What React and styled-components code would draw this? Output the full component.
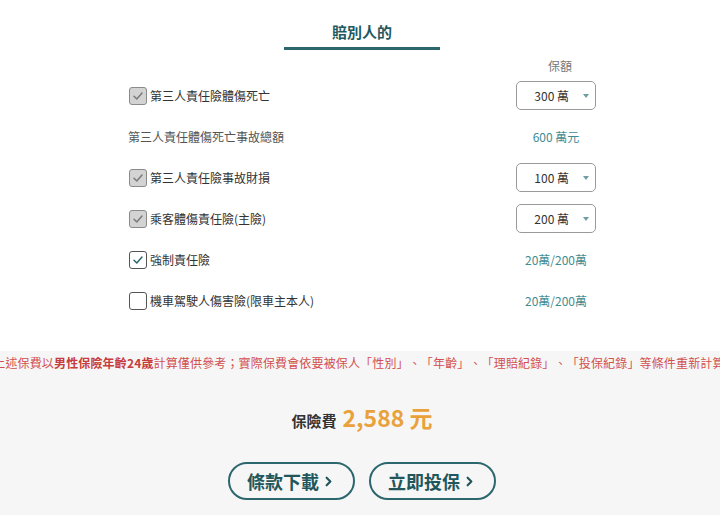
import React from "react";
import styled, { createGlobalStyle } from "styled-components";
import { ChevronRight } from "lucide-react";

const GlobalStyle = createGlobalStyle`
  html, body {
    margin: 0;
    padding: 0;
    background: #ffffff;
    font-family: "Noto Sans CJK TC", "Noto Sans", sans-serif;
    color: #333;
    text-spacing-trim: space-all;
  }
  * { box-sizing: border-box; }
`;

const Page = styled.div`
  width: 720px;
  height: 515px;
  overflow: hidden;
  display: flex;
  flex-direction: column;
`;

const Top = styled.section`
  padding: 0 0 30px 4px;
`;

const Inner = styled.div`
  width: 468px;
  margin: 0 auto;
`;

const Tabs = styled.div`
  display: flex;
  justify-content: center;
`;

const Tab = styled.div`
  width: 156px;
  padding: 20px 0 3px;
  text-align: center;
  font-size: 15px;
  line-height: 24px;
  font-weight: 700;
  color: #1e5a60;
  border-bottom: 3px solid #2b676d;
`;

const Header = styled.div`
  display: flex;
  justify-content: flex-end;
  margin-top: 7px;
`;

const ColHead = styled.div`
  width: 80px;
  padding-left: 8px;
  text-align: center;
  font-size: 12px;
  line-height: 18px;
  color: #777;
`;

const Row = styled.div`
  height: 41px;
  display: flex;
  align-items: center;
  justify-content: space-between;
`;

const Left = styled.label`
  display: flex;
  align-items: center;
  gap: 3px;
  padding-left: ${(p) => (p.$plain ? "0" : "1px")};
  font-size: 12px;
  color: ${(p) => (p.$plain ? "#555" : "#333")};
`;

const Box = styled.span`
  width: 18px;
  height: 18px;
  border-radius: 3px;
  border: 1.5px solid ${(p) => (p.$locked ? "#8a8a8a" : "#555")};
  background: ${(p) => (p.$locked ? "#d3d3d3" : "#fff")};
  display: flex;
  align-items: center;
  justify-content: center;
`;

const Right = styled.div`
  width: 80px;
  display: flex;
  justify-content: center;
`;

const Value = styled.span`
  font-size: 12px;
  color: #3f8c92;
`;

const Select = styled.div`
  width: 80px;
  height: 29px;
  border: 1px solid #9a9a9a;
  border-radius: 5px;
  display: flex;
  align-items: center;
  justify-content: flex-end;
  padding-right: 6px;
  gap: 14px;
  font-size: 12px;
  color: #333;
  background: #fff;
`;

const Caret = styled.span`
  width: 0;
  height: 0;
  border-left: 3.5px solid transparent;
  border-right: 3.5px solid transparent;
  border-top: 4px solid #6f9ea2;
`;

const Bottom = styled.section`
  flex: 1;
  background: #f6f6f6;
  padding: 2px 0 15px;
  display: flex;
  flex-direction: column;
  align-items: center;
`;

const Note = styled.div`
  width: 720px;
  display: flex;
  justify-content: center;
  overflow: hidden;
  padding-left: 10px;
`;

const NoteText = styled.p`
  margin: 0;
  white-space: nowrap;
  flex-shrink: 0;
  font-size: 12px;
  line-height: 20px;
  letter-spacing: 0.15px;
  color: #d24f4f;
  b {
    font-weight: 700;
    color: #c73c3c;
  }
`;

const Price = styled.div`
  margin-top: 27px;
  height: 34px;
  display: flex;
  align-items: baseline;
  gap: 6px;
  padding-left: 4px;
`;

const PriceLabel = styled.span`
  font-size: 15px;
  font-weight: 700;
  color: #333;
`;

const Amount = styled.span`
  font-size: 23px;
  font-weight: 700;
  color: #e9a23b;
`;

const Buttons = styled.div`
  margin-top: 28px;
  display: flex;
  gap: 14px;
  padding-left: 4px;
`;

const Button = styled.button`
  width: 127px;
  height: 38px;
  border: 2px solid #2b676d;
  border-radius: 19px;
  background: transparent;
  color: #22565b;
  font-family: inherit;
  font-size: 18px;
  font-weight: 700;
  display: flex;
  align-items: center;
  justify-content: center;
  gap: 2px;
  cursor: pointer;
`;

const Check = ({ color }) => (
  <svg width="12" height="12" viewBox="0 0 12 12">
    <path d="M2 6.3 L4.8 9 L10 3" fill="none" stroke={color} strokeWidth="1.5" strokeLinecap="round" strokeLinejoin="round" />
  </svg>
);

const Checkbox = ({ state }) => (
  <Box $locked={state === "locked"}>
    {state === "locked" && <Check color="#7a7a7a" />}
    {state === "on" && <Check color="#2b676d" />}
  </Box>
);

const rows = [
  { label: "第三人責任險體傷死亡", state: "locked", select: "300 萬" },
  { label: "第三人責任體傷死亡事故總額", plain: true, value: "600 萬元" },
  { label: "第三人責任險事故財損", state: "locked", select: "100 萬" },
  { label: "乘客體傷責任險(主險)", state: "locked", select: "200 萬" },
  { label: "強制責任險", state: "on", value: "20萬/200萬" },
  { label: "機車駕駛人傷害險(限車主本人)", state: "off", value: "20萬/200萬" },
];

export default function App() {
  return (
    <Page>
      <GlobalStyle />
      <Top>
        <Inner>
          <Tabs>
            <Tab>賠別人的</Tab>
          </Tabs>
          <Header>
            <ColHead>保額</ColHead>
          </Header>
          {rows.map((r) => (
            <Row key={r.label}>
              <Left $plain={r.plain}>
                {!r.plain && <Checkbox state={r.state} />}
                {r.label}
              </Left>
              <Right>
                {r.select ? (
                  <Select>
                    {r.select}
                    <Caret />
                  </Select>
                ) : (
                  <Value>{r.value}</Value>
                )}
              </Right>
            </Row>
          ))}
        </Inner>
      </Top>
      <Bottom>
        <Note>
          <NoteText>
            上述保費以<b>男性保險年齡24歲</b>計算僅供參考；實際保費會依要被保人「性別」、「年齡」、「理賠紀錄」、「投保紀錄」等條件重新計算。
          </NoteText>
        </Note>
        <Price>
          <PriceLabel>保險費</PriceLabel>
          <Amount>2,588 元</Amount>
        </Price>
        <Buttons>
          <Button>
            條款下載
            <ChevronRight size={15} strokeWidth={3.4} />
          </Button>
          <Button>
            立即投保
            <ChevronRight size={15} strokeWidth={3.4} />
          </Button>
        </Buttons>
      </Bottom>
    </Page>
  );
}
